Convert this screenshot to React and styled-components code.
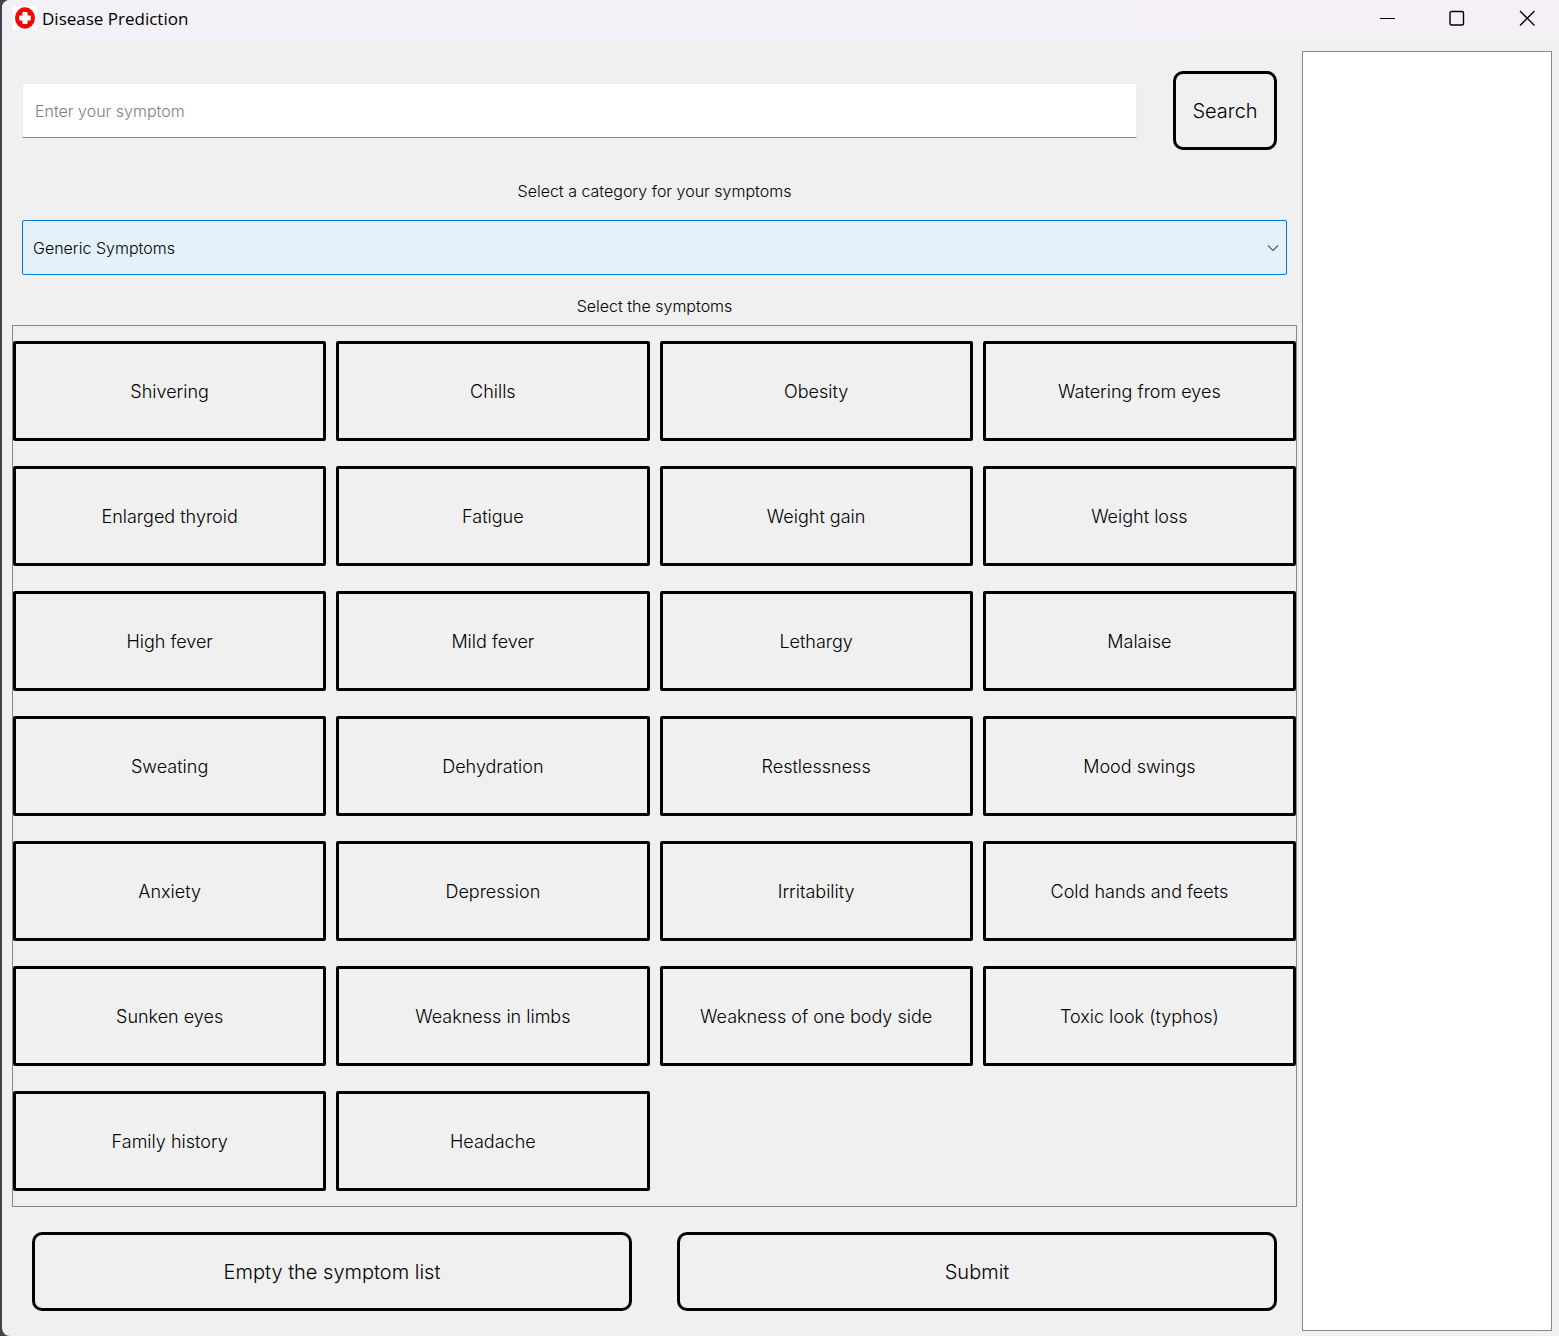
import React, { useState } from "react";
import styled, { createGlobalStyle } from "styled-components";

const GlobalStyle = createGlobalStyle`
  *, *::before, *::after { box-sizing: border-box; }
  body {
    margin: 0;
    background: #424249;
    color: #000;
    font-family: "Century Gothic", Inter, "Liberation Sans", sans-serif;
    font-weight: 300;
  }
  button, input, select { font: inherit; color: inherit; }
`;

const Window = styled.div`
  display: flex;
  flex-direction: column;
  min-height: 100vh;
  margin-left: 2px;
  background: #f0f0f0;
  border-radius: 8px 0 0 8px;
  overflow: hidden;
`;

const TitleBar = styled.header`
  display: flex;
  align-items: flex-start;
  justify-content: space-between;
  height: 41px;
  padding-left: 11px;
  background: linear-gradient(90deg, #f2f1f6, #f3f0f7 60%, #f5f0f5);
`;

const AppName = styled.h1`
  display: flex;
  align-items: center;
  gap: 5px;
  height: 36px;
  margin: 0;
  font: 400 17px "Segoe UI", "Open Sans", sans-serif;
`;

const WindowControls = styled.div`
  display: flex;
  gap: 6px;
`;

const ControlButton = styled.button`
  display: grid;
  place-items: center;
  width: 64px;
  height: 36px;
  padding: 0;
  border: 0;
  background: transparent;
`;

const Client = styled.main`
  display: flex;
  flex: 1;
  gap: 5px;
  padding: 10px 7px 5px 10px;
`;

const Form = styled.form`
  display: flex;
  flex: 1;
  flex-direction: column;
  min-width: 0;
`;

const SearchRow = styled.div`
  display: flex;
  align-items: center;
  gap: 36px;
  padding: 20px 20px 0 10px;
`;

const SearchInput = styled.input`
  flex: 1;
  min-width: 0;
  height: 55px;
  padding: 0 12px;
  border: 1px solid #ececec;
  border-bottom-color: #868686;
  border-radius: 0;
  background: #fff;
  font-size: 16px;
  outline: none;
  &::placeholder { color: #808080; opacity: 1; }
`;

const ActionButton = styled.button`
  flex: ${(p) => (p.$grow ? "1 1 0" : "0 0 104px")};
  height: 79px;
  padding: 0;
  border: 3px solid #000;
  border-radius: 10px;
  background: transparent;
  font-size: 20px;
`;

const Caption = styled.div`
  display: flex;
  align-items: center;
  justify-content: center;
  height: ${(p) => p.$height}px;
  margin-top: 12px;
  font-size: 16px;
`;

const SelectBox = styled.div`
  display: grid;
  align-items: center;
  margin: 0 10px;
  & > * { grid-area: 1 / 1; }
  & > svg { justify-self: end; margin-right: 8px; pointer-events: none; }
`;

const CategorySelect = styled.select`
  width: 100%;
  height: 55px;
  padding: 0 30px 0 10px;
  border: 1px solid #0078d4;
  border-radius: 2px;
  background: #e4f0fa;
  font-size: 16px;
  appearance: none;
  outline: none;
`;

const SymptomGrid = styled.div`
  display: grid;
  grid-template-columns: repeat(4, minmax(0, 1fr));
  grid-auto-rows: 100px;
  gap: 25px 10px;
  padding: 15px 0;
  border: 1px solid #828790;
`;

const SymptomButton = styled.button`
  padding: 0;
  border: 3px solid #000;
  border-radius: 2px;
  background: transparent;
  font-size: 18px;
`;

const Footer = styled.div`
  display: flex;
  gap: 45px;
  padding: 25px 20px 20px;
`;

const ChosenList = styled.ul`
  flex: 0 0 250px;
  margin: 0;
  padding: 4px;
  border: 1px solid #828790;
  background: #fff;
  list-style: none;
  font-size: 16px;
`;

const symptoms = [
  "Shivering", "Chills", "Obesity", "Watering from eyes",
  "Enlarged thyroid", "Fatigue", "Weight gain", "Weight loss",
  "High fever", "Mild fever", "Lethargy", "Malaise",
  "Sweating", "Dehydration", "Restlessness", "Mood swings",
  "Anxiety", "Depression", "Irritability", "Cold hands and feets",
  "Sunken eyes", "Weakness in limbs", "Weakness of one body side", "Toxic look (typhos)",
  "Family history", "Headache",
];

function MedicalCross() {
  return (
    <svg width="24" height="24" viewBox="0 0 24 24" aria-hidden="true">
      <path fill="#fff" d="M0 0h24v24H0z" />
      <ellipse cx="12" cy="12" rx="10" ry="10.7" fill="#f80404" />
      <g fill="#fff">
        <rect x="9.400" y="6" width="5.200" height="12" rx="1" />
        <rect x="6.200" y="9.400" width="11.600" height="5.200" rx="1" />
      </g>
    </svg>
  );
}

export default function App() {
  const [chosen, setChosen] = useState([]);
  const add = (name) => setChosen((list) => (list.includes(name) ? list : [...list, name]));

  return (
    <>
      <GlobalStyle />
      <Window>
        <TitleBar>
          <AppName><MedicalCross />Disease Prediction</AppName>
          <WindowControls>
            <ControlButton aria-label="Minimize">
              <svg width="16" height="16" fill="none" stroke="#000"><path d="M1 8.5h15" /></svg>
            </ControlButton>
            <ControlButton aria-label="Maximize">
              <svg width="16" height="16" fill="none" stroke="#000" strokeWidth="1.4"><rect x="1" y="1.5" width="13.5" height="13.5" rx="1.5" /></svg>
            </ControlButton>
            <ControlButton aria-label="Close">
              <svg width="16" height="16" fill="none" stroke="#000" strokeWidth="1.3"><path d="M1 1l14.500 14.500M15.500 1L1 15.500" /></svg>
            </ControlButton>
          </WindowControls>
        </TitleBar>
        <Client>
          <Form onSubmit={(e) => e.preventDefault()}>
            <SearchRow>
              <SearchInput type="text" aria-label="Enter your symptom" placeholder="Enter your symptom" />
              <ActionButton type="button">Search</ActionButton>
            </SearchRow>
            <Caption as="label" htmlFor="category" $height={58}>Select a category for your symptoms</Caption>
            <SelectBox>
              <CategorySelect id="category" defaultValue="generic">
                <option value="generic">Generic Symptoms</option>
              </CategorySelect>
              <svg width="12" height="8" fill="none" stroke="#555" strokeWidth="1.1" aria-hidden="true"><path d="M1 1.500l5 5 5-5" /></svg>
            </SelectBox>
            <Caption id="symptoms-caption" $height={38}>Select the symptoms</Caption>
            <SymptomGrid role="group" aria-labelledby="symptoms-caption">
              {symptoms.map((name) => (
                <SymptomButton key={name} type="button" onClick={() => add(name)}>{name}</SymptomButton>
              ))}
            </SymptomGrid>
            <Footer>
              <ActionButton $grow type="button" onClick={() => setChosen([])}>Empty the symptom list</ActionButton>
              <ActionButton $grow type="submit">Submit</ActionButton>
            </Footer>
          </Form>
          <ChosenList aria-label="Selected symptoms">
            {chosen.map((name) => <li key={name}>{name}</li>)}
          </ChosenList>
        </Client>
      </Window>
    </>
  );
}
